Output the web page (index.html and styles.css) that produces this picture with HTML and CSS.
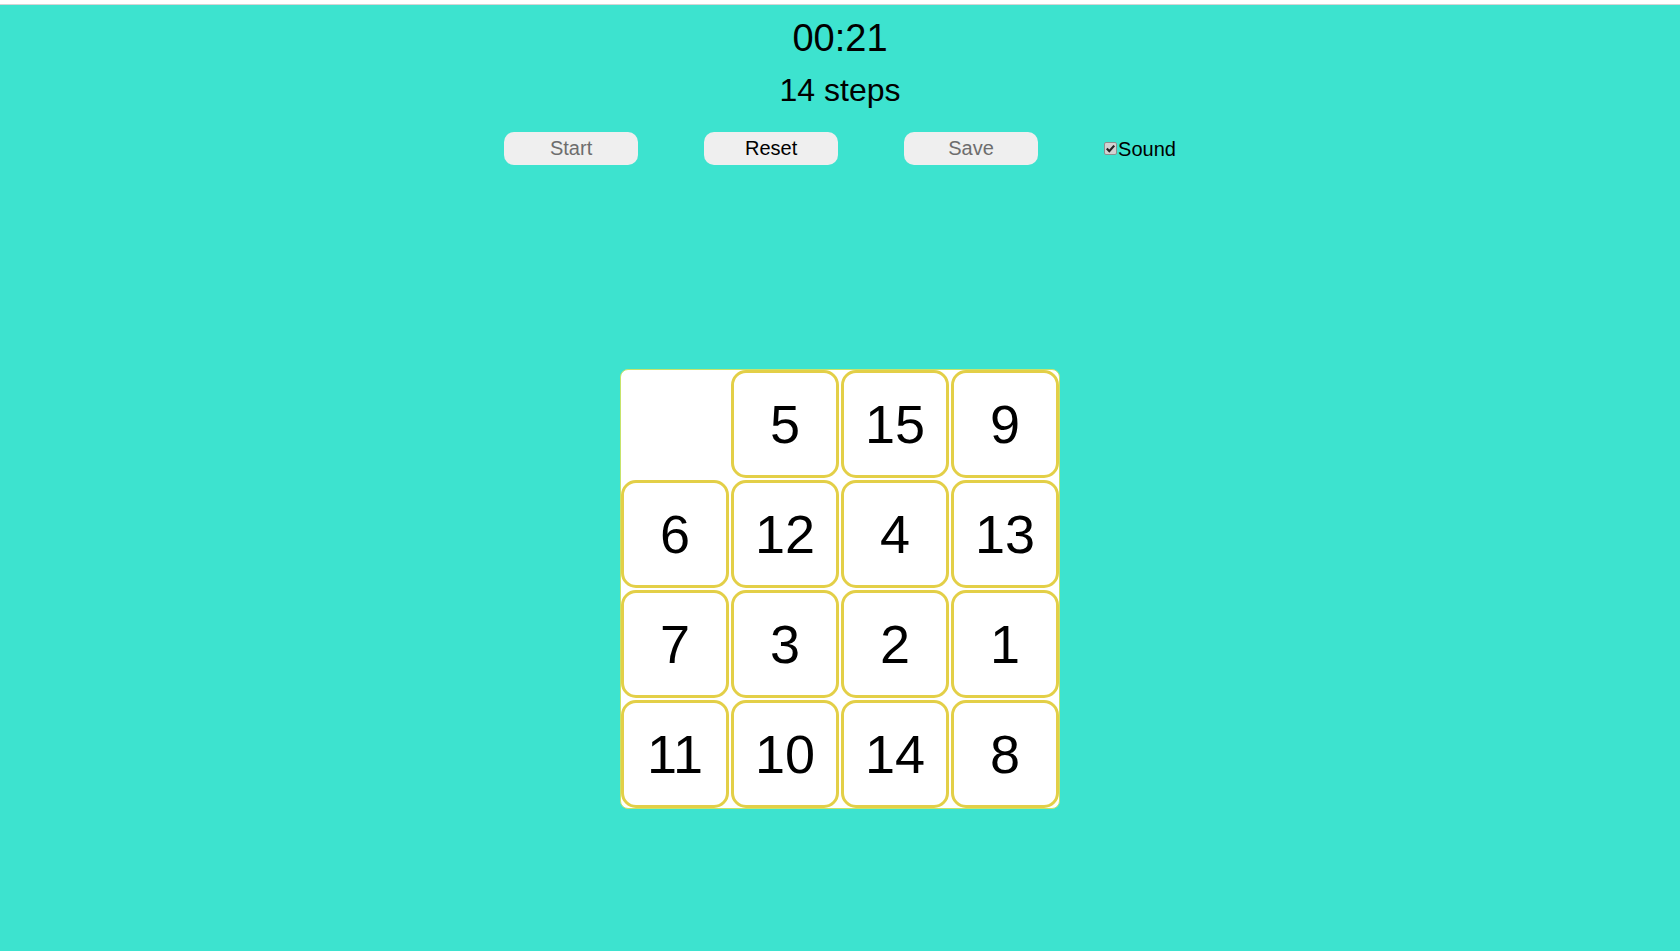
FILE: index.html
```html
<!DOCTYPE html>
<html lang="en">
<head>
<meta charset="utf-8">
<title>Gem Puzzle</title>
<link rel="stylesheet" href="styles.css">
</head>
<body>
<div class="page">
  <div class="timer">00:21</div>
  <div class="steps">14 steps</div>
  <div class="controls">
    <button class="btn btn-disabled" type="button">Start</button>
    <button class="btn" type="button">Reset</button>
    <button class="btn btn-disabled" type="button">Save</button>
    <label class="sound"><input class="check" type="checkbox" checked>Sound</label>
  </div>
  <div class="board">
    <div class="cell empty"></div>
    <div class="cell">5</div>
    <div class="cell">15</div>
    <div class="cell">9</div>
    <div class="cell">6</div>
    <div class="cell">12</div>
    <div class="cell">4</div>
    <div class="cell">13</div>
    <div class="cell">7</div>
    <div class="cell">3</div>
    <div class="cell">2</div>
    <div class="cell">1</div>
    <div class="cell">11</div>
    <div class="cell">10</div>
    <div class="cell">14</div>
    <div class="cell">8</div>
  </div>
</div>
</body>
</html>
```
FILE: styles.css
```css
html {
  background: #ffffff;
}
body {
  margin: 4px 0 0 0;
  border-top: 1px solid #d4d4d4;
  background: #3de3cf;
  font-family: "Liberation Sans", Arial, sans-serif;
  color: #000;
  min-height: 947px;
  box-sizing: border-box;
}
.page {
  display: flex;
  flex-direction: column;
  align-items: center;
  padding-top: 11px;
}
.timer {
  font-size: 38px;
  line-height: 44px;
}
.steps {
  font-size: 32px;
  line-height: 38px;
  margin-top: 11px;
}
.controls {
  display: flex;
  align-items: center;
  gap: 66px;
  margin-top: 23px;
}
.btn {
  width: 134px;
  height: 33px;
  border: none;
  border-radius: 10px;
  background: #efefef;
  font-family: "Liberation Sans", Arial, sans-serif;
  font-size: 20px;
  color: #000;
  padding: 0;
}
.btn-disabled {
  color: #6d6d6d;
}
.sound {
  display: flex;
  align-items: center;
  font-size: 20px;
  line-height: 24px;
}
.check {
  appearance: none;
  -webkit-appearance: none;
  width: 13px;
  height: 13px;
  margin: 0 1px 0 0;
  border: 1px solid #8f8f8f;
  border-radius: 2px;
  background: #d2d2d2 url("data:image/svg+xml,%3Csvg xmlns='http://www.w3.org/2000/svg' viewBox='0 0 11 11'%3E%3Cpath d='M1.8 5.6 L4.3 8.2 L9.2 2.6' fill='none' stroke='%23222' stroke-width='2.2'/%3E%3C/svg%3E") no-repeat center / 11px 11px;
  box-sizing: border-box;
}
.board {
  margin-top: 204px;
  display: grid;
  grid-template-columns: repeat(4, 108px);
  grid-auto-rows: 108px;
  gap: 2px;
  border: 1px solid #c6e36a;
  border-radius: 8px;
  background: #ffffff;
}
.cell {
  box-sizing: border-box;
  border: 3px solid #e3cf47;
  border-radius: 15px;
  background: #ffffff;
  display: flex;
  align-items: center;
  justify-content: center;
  font-size: 54px;
}
.cell.empty {
  border-color: transparent;
}
```
